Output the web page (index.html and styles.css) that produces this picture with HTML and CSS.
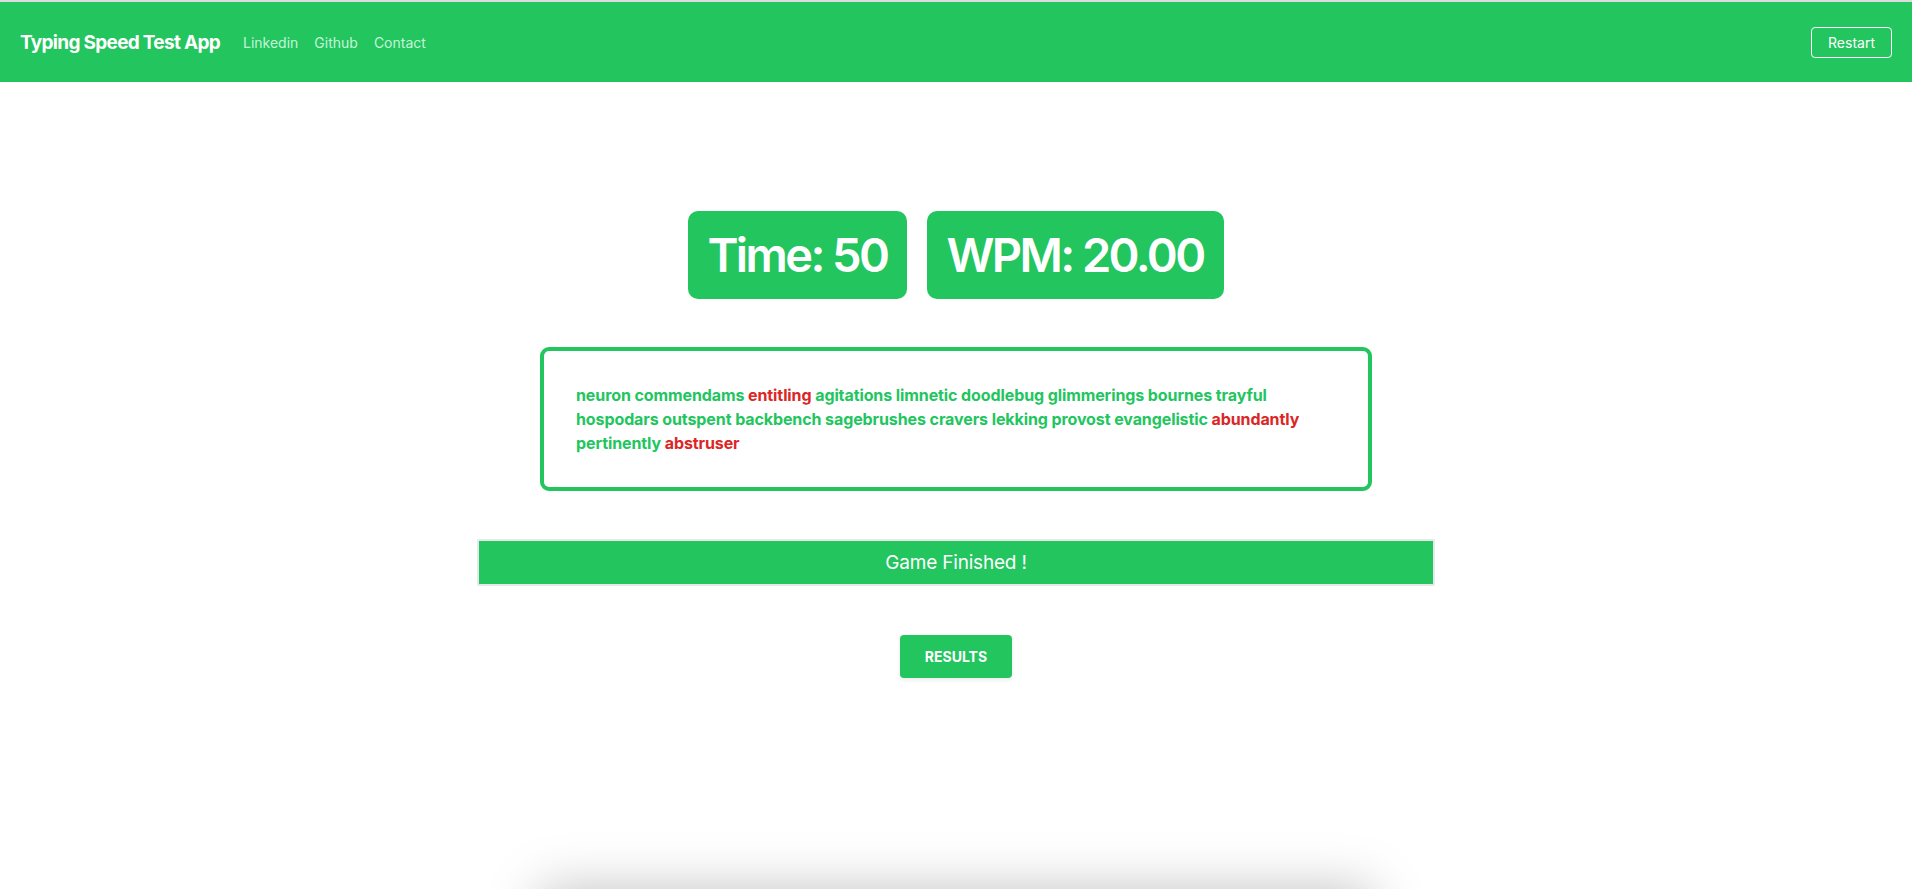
FILE: index.html
```html
<!DOCTYPE html>
<html lang="en">
<head>
<meta charset="utf-8">
<title>Typing Speed Test App</title>
<link rel="stylesheet" href="styles.css">
</head>
<body>
<nav class="navbar">
  <div class="nav-left">
    <span class="brand">Typing Speed Test App</span>
    <div class="nav-links">
      <a href="#" class="nav-link">Linkedin</a>
      <a href="#" class="nav-link">Github</a>
      <a href="#" class="nav-link">Contact</a>
    </div>
  </div>
  <button class="restart-btn">Restart</button>
</nav>

<main class="main">
  <div class="stats">
    <div class="stat">Time: 50</div>
    <div class="stat">WPM: 20.00</div>
  </div>

  <div class="words-box">
    <p class="words">
      <span class="ok">neuron</span> <span class="ok">commendams</span> <span class="bad">entitling</span> <span class="ok">agitations</span> <span class="ok">limnetic</span> <span class="ok">doodlebug</span> <span class="ok">glimmerings</span> <span class="ok">bournes</span> <span class="ok">trayful</span> <span class="ok">hospodars</span> <span class="ok">outspent</span> <span class="ok">backbench</span> <span class="ok">sagebrushes</span> <span class="ok">cravers</span> <span class="ok">lekking</span> <span class="ok">provost</span> <span class="ok">evangelistic</span> <span class="bad">abundantly</span> <span class="ok">pertinently</span> <span class="bad">abstruser</span>
    </p>
  </div>

  <div class="finished">Game Finished !</div>

  <button class="results-btn">Results</button>

  <section class="results-panel"></section>
</main>
</body>
</html>
```

FILE: styles.css
```css
* {
  box-sizing: border-box;
}

html, body {
  margin: 0;
  padding: 0;
  background: #ffffff;
  overflow: hidden;
}

body {
  font-family: Inter, "Noto Sans", "Liberation Sans", sans-serif;
  color: #111827;
}

.navbar {
  border-top: 2px solid #dcdcdc;
  background: #22c55e;
  height: 82px;
  padding: 0 20px;
  display: flex;
  align-items: center;
  justify-content: space-between;
}

.nav-left {
  display: flex;
  align-items: center;
  gap: 23px;
}

.brand {
  color: #ffffff;
  font-size: 19px;
  font-weight: 700;
  letter-spacing: -0.7px;
}

.nav-links {
  display: flex;
  gap: 16px;
}

.nav-link {
  color: #c5f5d8;
  font-size: 14px;
  text-decoration: none;
}

.restart-btn {
  font-family: inherit;
  background: transparent;
  color: #ffffff;
  border: 1px solid #ffffff;
  border-radius: 4px;
  font-size: 14px;
  height: 31px;
  width: 81px;
  padding: 0;
  cursor: pointer;
}

.main {
  display: flex;
  flex-direction: column;
  align-items: center;
  padding-top: 129px;
}

.stats {
  display: flex;
  gap: 20px;
}

.stat {
  background: #22c55e;
  color: #ffffff;
  border-radius: 10px;
  font-size: 47px;
  line-height: 48px;
  font-weight: 600;
  letter-spacing: -2.6px;
  padding: 20px 20px 20px 19px;
}

.words-box {
  margin-top: 48px;
  width: 832px;
  border: 4px solid #22c55e;
  border-radius: 9px;
  padding: 32px 32px;
}

.words {
  margin: 0;
  font-size: 16px;
  line-height: 24px;
  font-weight: 700;
  letter-spacing: -0.1px;
}

.ok {
  color: #22c55e;
}

.bad {
  color: #dc2626;
}

.finished {
  margin-top: 48px;
  width: 958px;
  background: #22c55e;
  border: 2px solid #e5e7eb;
  border-radius: 2px;
  color: #ffffff;
  font-size: 19px;
  line-height: 27px;
  padding: 8px 0;
  text-align: center;
  letter-spacing: -0.2px;
}

.results-btn {
  margin-top: 49px;
  font-family: inherit;
  background: #22c55e;
  color: #ffffff;
  border: none;
  border-radius: 4px;
  font-size: 14px;
  font-weight: 700;
  text-transform: uppercase;
  line-height: 19px;
  padding: 12px 24px;
  width: 112px;
  box-shadow: 0 2px 4px rgba(0, 0, 0, 0.08);
  cursor: pointer;
}

.results-panel {
  margin-top: 212px;
  width: 832px;
  height: 300px;
  background: #ffffff;
  box-shadow: 0 0 50px rgba(0, 0, 0, 0.25);
}
```
